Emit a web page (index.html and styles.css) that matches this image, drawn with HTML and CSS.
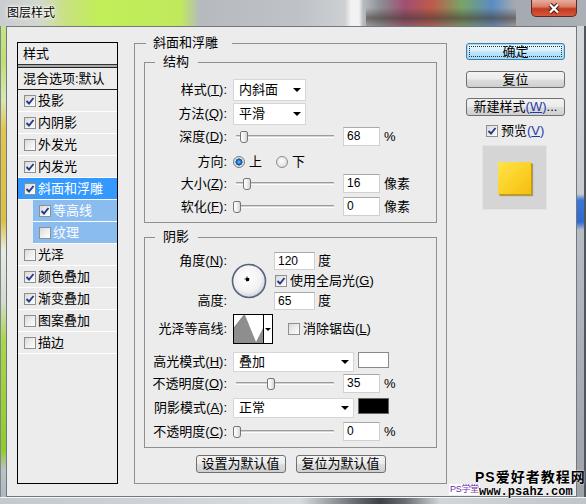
FILE: index.html
```html
<!DOCTYPE html>
<html lang="zh">
<head>
<meta charset="utf-8">
<title>图层样式</title>
<link rel="stylesheet" href="styles.css">
</head>
<body>
<div class="window">
  <div class="titlebar">
    <span class="title">图层样式</span>
    <div class="close">
      <svg width="14" height="11" viewBox="0 0 14 11"><path d="M3 1.5 L11 9.5 M11 1.5 L3 9.5" stroke="#4a1a12" stroke-width="4.4" fill="none"/><path d="M3 1.5 L11 9.5 M11 1.5 L3 9.5" stroke="#fff" stroke-width="2.4" fill="none"/></svg>
    </div>
  </div>
  <div class="body">
    <div class="frame-left"></div>
    <div class="client">
      <div class="styles-panel">
        <div class="sp-head">样式</div>
        <div class="sp-gap"></div>
        <div class="sp-blend">混合选项:默认</div>
        <div class="sp-row"><span class="cb"><svg viewBox="0 0 10 10"><path d="M1.5 5 L4 7.5 L8.5 2"/></svg></span>投影</div>
        <div class="sp-row"><span class="cb"><svg viewBox="0 0 10 10"><path d="M1.5 5 L4 7.5 L8.5 2"/></svg></span>内阴影</div>
        <div class="sp-row"><span class="cb"></span>外发光</div>
        <div class="sp-row"><span class="cb"><svg viewBox="0 0 10 10"><path d="M1.5 5 L4 7.5 L8.5 2"/></svg></span>内发光</div>
        <div class="sp-row sel"><span class="cb"><svg viewBox="0 0 10 10"><path d="M1.5 5 L4 7.5 L8.5 2"/></svg></span>斜面和浮雕</div>
        <div class="sp-row sub"><span class="cb"><svg viewBox="0 0 10 10"><path d="M1.5 5 L4 7.5 L8.5 2"/></svg></span>等高线</div>
        <div class="sp-row sub"><span class="cb"></span>纹理</div>
        <div class="sp-row"><span class="cb"></span>光泽</div>
        <div class="sp-row"><span class="cb"><svg viewBox="0 0 10 10"><path d="M1.5 5 L4 7.5 L8.5 2"/></svg></span>颜色叠加</div>
        <div class="sp-row"><span class="cb"><svg viewBox="0 0 10 10"><path d="M1.5 5 L4 7.5 L8.5 2"/></svg></span>渐变叠加</div>
        <div class="sp-row"><span class="cb"></span>图案叠加</div>
        <div class="sp-row"><span class="cb"></span>描边</div>
      </div>

      <div class="bevel group">
        <div class="legend l-outer">斜面和浮雕</div>
        <div class="group struct">
          <div class="legend l-inner">结构</div>
          <div class="frow r-sel1">
            <span class="lbl">样式(<u>T</u>):</span>
            <div class="select s-short"><span>内斜面</span><i class="arrow"></i></div>
          </div>
          <div class="frow r-sel2">
            <span class="lbl">方法(<u>Q</u>):</span>
            <div class="select s-short"><span>平滑</span><i class="arrow"></i></div>
          </div>
          <div class="frow r-depth">
            <span class="lbl">深度(<u>D</u>):</span>
            <div class="slider"><div class="track"></div><div class="thumb" style="left:7px"></div></div>
            <div class="num">68</div><span class="unit">%</span>
          </div>
          <div class="frow r-dir">
            <span class="lbl">方向:</span>
            <span class="radio on"></span><span class="rtext">上</span>
            <span class="radio r2"></span><span class="rtext">下</span>
          </div>
          <div class="frow r-size">
            <span class="lbl">大小(<u>Z</u>):</span>
            <div class="slider"><div class="track"></div><div class="thumb" style="left:10px"></div></div>
            <div class="num">16</div><span class="unit">像素</span>
          </div>
          <div class="frow r-soft">
            <span class="lbl">软化(<u>F</u>):</span>
            <div class="slider"><div class="track"></div><div class="thumb" style="left:0px"></div></div>
            <div class="num">0</div><span class="unit">像素</span>
          </div>
        </div>

        <div class="group shade">
          <div class="legend l-inner">阴影</div>
          <div class="angle-grid">
            <span class="lbl g-l1">角度(<u>N</u>):</span>
            <div class="dial">
              <svg width="36" height="36" viewBox="0 0 36 36">
                <defs>
                  <radialGradient id="dg" cx="45%" cy="40%" r="60%">
                    <stop offset="0" stop-color="#ffffff"/>
                    <stop offset="0.7" stop-color="#f2f2f2"/>
                    <stop offset="1" stop-color="#cfd2d6"/>
                  </radialGradient>
                </defs>
                <circle cx="18" cy="18" r="16.5" fill="url(#dg)" stroke="#56647e" stroke-width="1.6"/>
                <path d="M16 13.5 V18.5 M13.5 16 H18.5" stroke="#111" stroke-width="1"/>
                <rect x="15" y="15" width="3" height="3" fill="#000"/>
              </svg>
            </div>
            <div class="g-c1"><div class="num n-ang">120</div><span class="unit u-deg">度</span></div>
            <div class="g-c2"><span class="cb"><svg viewBox="0 0 10 10"><path d="M1.5 5 L4 7.5 L8.5 2"/></svg></span><span class="cbt">使用全局光(<u>G</u>)</span></div>
            <span class="lbl g-l3">高度:</span>
            <div class="g-c3"><div class="num n-ang">65</div><span class="unit u-deg">度</span></div>
          </div>
          <div class="frow r-contour">
            <span class="lbl">光泽等高线:</span>
            <div class="contour">
              <svg class="c-graph" width="29" height="28" viewBox="0 0 29 28"><path d="M0 28 L0 12 L9.5 0 L11 0 L22 27 L29 13 L29 28 Z" fill="#8e8e8e"/></svg>
              <div class="c-drop"><i class="arrow small"></i></div>
            </div>
            <span class="cb cb-anti"></span><span class="cbt">消除锯齿(<u>L</u>)</span>
          </div>
          <div class="frow r-hmode">
            <span class="lbl">高光模式(<u>H</u>):</span>
            <div class="select s-wide"><span>叠加</span><i class="arrow"></i></div>
            <div class="swatch white"></div>
          </div>
          <div class="frow r-op1">
            <span class="lbl">不透明度(<u>O</u>):</span>
            <div class="slider"><div class="track"></div><div class="thumb" style="left:34px"></div></div>
            <div class="num">35</div><span class="unit">%</span>
          </div>
          <div class="frow r-smode">
            <span class="lbl">阴影模式(<u>A</u>):</span>
            <div class="select s-wide"><span>正常</span><i class="arrow"></i></div>
            <div class="swatch black"></div>
          </div>
          <div class="frow r-op2">
            <span class="lbl">不透明度(<u>C</u>):</span>
            <div class="slider"><div class="track"></div><div class="thumb" style="left:0px"></div></div>
            <div class="num">0</div><span class="unit">%</span>
          </div>
        </div>

        <div class="defaults">
          <div class="btn b-def">设置为默认值</div>
          <div class="btn b-def">复位为默认值</div>
        </div>
      </div>

      <div class="side">
        <div class="btn b-side primary">确定</div>
        <div class="btn b-side b-reset">复位</div>
        <div class="btn b-side b-new">新建样式<span class="mn">(<u>W</u>)</span>...</div>
        <div class="pv-row"><span class="cb"><svg viewBox="0 0 10 10"><path d="M1.5 5 L4 7.5 L8.5 2"/></svg></span><span>预览<span class="mn">(<u>V</u>)</span></span></div>
        <div class="preview"><div class="yellow"></div></div>
      </div>
    </div>
    <div class="frame-right"></div>
  </div>
  <div class="frame-bottom"></div>

  <div class="wm wm1">PS爱好者教程网</div>
  <div class="wm wm2">PS学堂</div>
  <div class="wm wm3">www.psahz.com</div>
</div>
</body>
</html>
```

FILE: styles.css
```css
* { box-sizing: border-box; }

body {
  margin: 0;
  font-family: "Liberation Sans", "Noto Sans CJK SC", sans-serif;
  font-size: 13px;
  color: #000;
  background: #a8aeb4;
}

u { text-decoration: underline; text-underline-offset: 1px; }

.window {
  width: 586px;
  height: 504px;
  position: relative;
  overflow: hidden;
  background: #a8aeb4;
}

/* ---------- title bar ---------- */
.titlebar {
  height: 26px;
  display: flex;
  justify-content: space-between;
  align-items: flex-start;
  background:
    linear-gradient(180deg, rgba(0,0,0,0) 30%, rgba(70,58,52,.6) 70%, rgba(120,110,100,.3) 100%) no-repeat 366px 0 / 150px 100%,
    linear-gradient(90deg,
      #c9cdd1 0px, #d2d8cc 40px, #c8e27e 67px, #c2ee58 100px, #c0ea5c 180px,
      #b6babe 200px, #bfc2c6 300px, #cdd0d3 345px, #f2f2f2 351px, #f2f2f2 359px,
      #b8bcc0 363px, #8c9094 380px, #a04e70 405px, #c05a4a 432px, #78a468 462px,
      #5a8cc4 492px, #a4aab0 515px, #aab0b6 586px);
}

.title {
  margin: 6px 0 0 7px;
  font-size: 12px;
  line-height: 14px;
  text-shadow: 0 0 5px #fff, 0 0 3px #fff, 0 0 2px #fff;
}

.close {
  width: 46px;
  height: 17px;
  margin-right: 9px;
  border: 1px solid #5b2a24;
  border-top: none;
  border-radius: 0 0 5px 5px;
  background: linear-gradient(180deg, #e8ada0 0%, #da7d68 42%, #c43a1f 55%, #d4583d 100%);
  display: flex;
  align-items: center;
  justify-content: center;
}

/* ---------- frame ---------- */
.body {
  display: flex;
  height: 471px;
}

.frame-left {
  width: 6px;
  border-left: 1px solid #80888e;
  background: linear-gradient(180deg,
    #c6e48a 0px, #bfe070 34px, #d8e8b2 74px, #e2c64a 104px, #dcc040 194px,
    #e8ece0 224px, #d8dcd0 274px, #a8d848 314px, #90cc28 424px, #b8c4c8 444px, #b0b8c0 471px);
}

.frame-right {
  width: 9px;
  background:
    linear-gradient(180deg, #d6d9dc 0px, #c8ccd0 168px, #3a78d8 174px, #2f6ad0 196px, #b6bcc2 204px, #9ca2a8 471px);
  border-right: 2px solid #50565c;
}

.frame-bottom {
  height: 7px;
  background: linear-gradient(90deg, #c4c9ce 0px, #d8dcdf 300px, #6a6e72 355px, #3e4246 380px, #6a6e72 405px, #d2d6d9 440px, #c0c5ca 586px);
  border-top: 1px solid #f4f6f8;
}

/* ---------- client ---------- */
.client {
  width: 571px;
  border: 1px solid #72787e;
  background: #ececec;
  display: flex;
  align-items: flex-start;
}

/* ---------- styles list ---------- */
.styles-panel {
  margin: 15px 0 0 10px;
  width: 101px;
  height: 442px;
  flex: none;
  border: 1px solid #000;
  background: #ececec;
}

.sp-head {
  height: 22px;
  padding-left: 5px;
  line-height: 21px;
  border-bottom: 1px solid #333;
}

.sp-gap {
  height: 2px;
  background: #a9a9a9;
}

.sp-blend {
  height: 23px;
  padding-left: 5px;
  line-height: 21px;
  border-top: 1px solid #222;
  border-bottom: 1px solid #222;
}

.sp-row {
  height: 22px;
  display: flex;
  align-items: center;
  gap: 2px;
  padding-left: 6px;
  border-bottom: 1px solid #fff;
  line-height: 16px;
}

.sp-row.sel {
  background: #3399ff;
  color: #fff;
}

.sp-row.sub {
  margin-left: 15px;
  background: #8bbcf0;
  color: #fff;
}

/* checkbox */
.cb {
  width: 12px;
  height: 12px;
  flex: none;
  display: inline-flex;
  border: 1px solid #8e8f8f;
  background: linear-gradient(135deg, #d8d8d8 0%, #f0f0f0 55%, #fcfcfc 100%);
}

.cb svg {
  width: 10px;
  height: 10px;
}

.cb path {
  fill: none;
  stroke: #27388a;
  stroke-width: 1.9;
}

/* ---------- groups ---------- */
.group {
  border: 1px solid #8f8f8f;
}

.legend {
  display: block;
  width: max-content;
  height: 16px;
  line-height: 16px;
  margin-top: -9px;
  background: #ececec;
}

.l-outer {
  margin-left: 2px;
  padding: 0 14px 0 7px;
}

.l-inner {
  margin-left: 10px;
  padding: 0 9px 0 8px;
}

.bevel {
  margin: 16px 0 0 16px;
  width: 313px;
  flex: none;
  padding: 0 9px 10px;
}

.struct {
  margin-top: 11px;
  width: 293px;
  padding-bottom: 6px;
}

.shade {
  margin-top: 14px;
  width: 293px;
  padding-bottom: 6px;
}

.frow {
  display: flex;
  align-items: center;
  line-height: 16px;
}

.lbl {
  width: 88px;
  flex: none;
  text-align: right;
  padding-right: 6px;
  white-space: nowrap;
}

.r-sel1 { margin-top: 9px; height: 22px; }
.r-sel2 { margin-top: 2px; height: 22px; }
.r-depth { margin-top: 2px; height: 19px; }
.r-dir { margin-top: 6px; height: 19px; }
.r-size { margin-top: 3px; height: 19px; }
.r-soft { margin-top: 4px; height: 19px; }

.r-contour { margin-top: 4px; height: 30px; }
.r-hmode { margin-top: 8px; height: 20px; align-items: flex-start; }
.r-hmode .lbl, .r-smode .lbl { line-height: 20px; }
.r-op1 { margin-top: 2px; height: 19px; }
.r-smode { margin-top: 5px; height: 20px; align-items: flex-start; }
.r-op2 { margin-top: 4px; height: 19px; }

/* dropdown */
.select {
  height: 22px;
  background: #fff;
  border: 1px solid #d6d6d6;
  display: flex;
  align-items: center;
  justify-content: space-between;
  padding: 0 4px 0 5px;
}

.s-short { width: 73px; }
.s-wide { width: 121px; height: 20px; }

.arrow {
  width: 0;
  height: 0;
  border-left: 4px solid transparent;
  border-right: 4px solid transparent;
  border-top: 4px solid #000;
}

.arrow.small {
  border-left-width: 3px;
  border-right-width: 3px;
  border-top-width: 3px;
}

/* slider */
.slider {
  width: 110px;
  height: 19px;
  flex: none;
  position: relative;
  display: flex;
  align-items: center;
}

.track {
  margin-left: 3px;
  width: 98px;
  height: 3px;
  border-top: 1px solid #9c9c9c;
  border-bottom: 1px solid #fdfdfd;
  background: #d4d4d4;
}

.thumb {
  position: absolute;
  top: 4px;
  width: 8px;
  height: 12px;
  border: 1px solid #767676;
  border-radius: 2px 2px 3px 3px;
  background: linear-gradient(90deg, #ffffff 0%, #f0f0f0 50%, #d4d4d4 100%);
}

/* number field */
.num {
  width: 37px;
  height: 19px;
  flex: none;
  background: #fff;
  border: 1px solid #d0d0d0;
  border-top-color: #a9a9a9;
  padding-left: 3px;
  font-size: 12px;
  line-height: 17px;
}

.unit { margin-left: 4px; }

/* radios */
.radio {
  width: 12px;
  height: 12px;
  flex: none;
  border-radius: 50%;
  border: 1px solid #8a8a8a;
  background: radial-gradient(circle at 45% 40%, #fbfbfb 0%, #e6e6e6 60%, #cfcfcf 100%);
}

.radio.on {
  border-color: #6f7f90;
  background: radial-gradient(circle at 50% 50%, #7cc6ff 0px, #1e72c4 2px, #0b4a90 3.3px, #e4e4e4 3.8px, #d6d6d6 100%);
}

.rtext { margin-left: 4px; }
.radio.r2 { margin-left: 14px; }

/* angle grid */
.angle-grid {
  margin-top: 7px;
  display: grid;
  grid-template-columns: 88px 41px auto;
  grid-template-rows: 18px 22px 18px;
  line-height: 16px;
}

.g-l1 { grid-column: 1; grid-row: 1; align-self: center; }
.g-l3 { grid-column: 1; grid-row: 3; align-self: center; }

.dial {
  grid-column: 2;
  grid-row: 1 / 4;
  align-self: center;
  margin-left: -2px;
  height: 36px;
}

.dial svg { display: block; }

.g-c1, .g-c2, .g-c3 {
  grid-column: 3;
  display: flex;
  align-items: center;
}

.g-c1 { grid-row: 1; }
.g-c2 { grid-row: 2; padding-left: 1px; }
.g-c3 { grid-row: 3; }

.n-ang { width: 41px; height: 18px; line-height: 16px; }
.u-deg { margin-left: 3px; }

.cbt { margin-left: 3px; white-space: nowrap; }

/* contour */
.contour {
  width: 40px;
  height: 30px;
  flex: none;
  border: 1px solid #000;
  background: #fff;
  display: flex;
}

.c-graph { display: block; flex: none; }

.c-drop {
  width: 9px;
  border-left: 1px solid #000;
  display: flex;
  align-items: center;
  justify-content: center;
}

.cb-anti { margin-left: 15px; }

/* swatches */
.swatch {
  width: 31px;
  height: 16px;
  margin-left: 4px;
  flex: none;
  border: 1px solid #7a7a7a;
}

.swatch.white { background: #fff; border-color: #8a8a8a; }
.swatch.black { background: #000; border-color: #666; }

/* buttons */
.btn {
  position: relative;
  display: flex;
  align-items: center;
  justify-content: center;
  border: 1px solid #707070;
  border-radius: 3px;
  background: linear-gradient(180deg, #f3f3f3 0%, #ebebeb 48%, #dddddd 52%, #cfcfcf 100%);
  line-height: 14px;
  white-space: nowrap;
}

.defaults {
  margin-top: 7px;
  display: flex;
  justify-content: center;
  gap: 10px;
}

.b-def { width: 90px; height: 18px; }

.side {
  margin: 16px 0 0 19px;
  width: 99px;
  flex: none;
}

.b-side { width: 99px; height: 17px; }
.b-reset { margin-top: 11px; }
.b-new { margin-top: 10px; height: 18px; }

.btn.primary {
  border-color: #3c7fb1;
  box-shadow: inset 0 0 0 1px #9fdcf6;
  background: linear-gradient(180deg, #eaf6fd 0%, #d9f0fc 48%, #bee6fd 52%, #a7d9f5 100%);
}

.btn.primary::before {
  content: "";
  position: absolute;
  left: 2px;
  right: 2px;
  top: 2px;
  bottom: 2px;
  border: 1px dotted #333;
}

.mn { color: #1e3ca8; }

.pv-row {
  margin-top: 7px;
  height: 16px;
  display: flex;
  align-items: center;
  gap: 3px;
  padding-left: 20px;
  line-height: 16px;
}

.preview {
  margin: 6px 0 0 16px;
  width: 65px;
  height: 65px;
  background: #d5d5d5;
  border: 1px solid #e4e4e4;
  display: flex;
  align-items: center;
  justify-content: center;
}

.yellow {
  width: 33px;
  height: 32px;
  background: linear-gradient(135deg, #ffe34e 0%, #fbd024 55%, #f2bf12 100%);
  box-shadow: 1px 1px 0 #c99a00, 2px 2px 1px rgba(110, 80, 0, 0.45);
}

/* watermark overlay */
.wm {
  position: absolute;
  white-space: nowrap;
  text-shadow: 0 0 2px #fff, 0 0 1px #fff;
}

.wm1 {
  left: 475px;
  top: 469px;
  font-size: 14px;
  font-weight: bold;
  line-height: 16px;
  letter-spacing: 1px;
}

.wm2 {
  left: 449px;
  top: 484px;
  font-size: 9px;
  line-height: 11px;
  letter-spacing: -0.3px;
  color: #6a1fb0;
  background: #fff;
  padding: 0 1px;
}

.wm3 {
  left: 479px;
  top: 485px;
  font-size: 12px;
  font-weight: bold;
  line-height: 14px;
  font-family: "Liberation Mono", "DejaVu Sans Mono", monospace;
}
```
